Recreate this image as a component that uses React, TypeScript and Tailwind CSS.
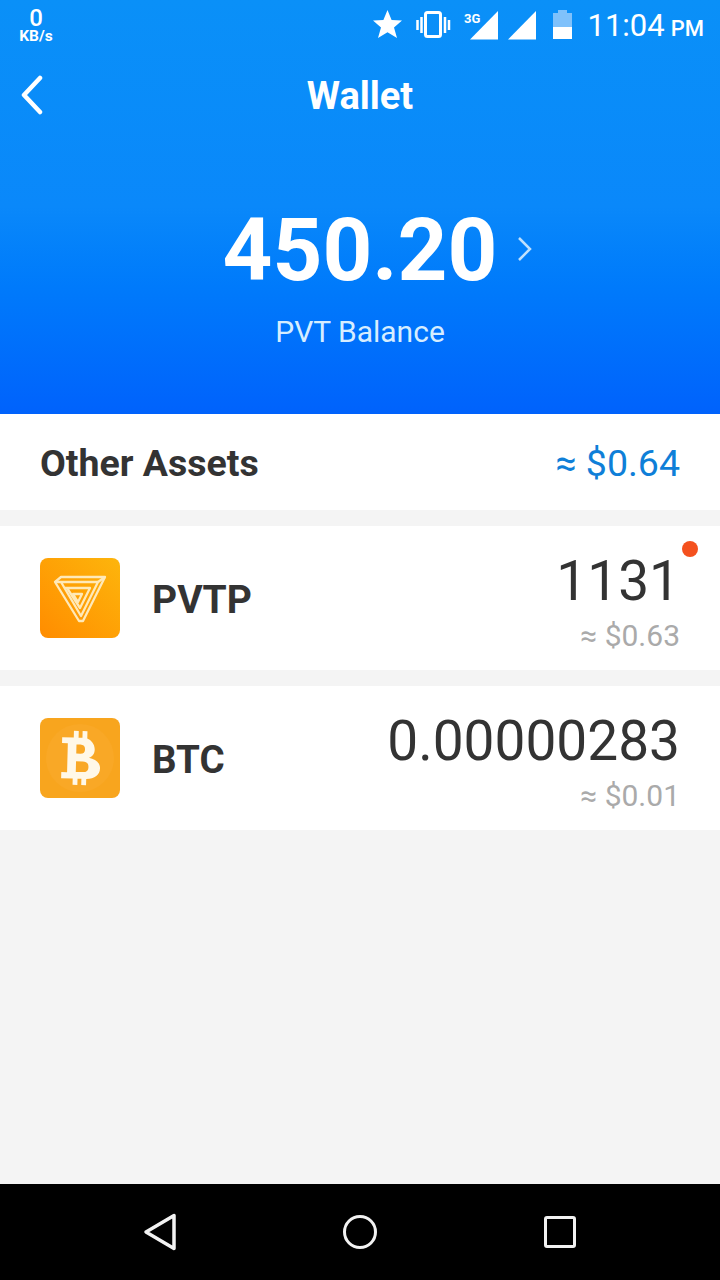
import React from "react";

function StatusIcons() {
  return (
    <svg width="199" height="50" viewBox="373 0 199 50">
      <path d="M387.5 10 L391.6 20 L402 20.6 L394 27.5 L397 38 L387.5 32.2 L378 38 L381 27.5 L373 20.6 L383.4 20 Z" fill="#fff" />
      <rect x="425.5" y="12.5" width="15" height="24" rx="2" fill="none" stroke="#fff" strokeWidth="3" />
      <path d="M417.5 20 v10 M421.5 17 v16 M445 17 v16 M449 20 v10" stroke="#fff" strokeWidth="2.5" fill="none" />
      <text x="464" y="23" fill="#fff" fontSize="13" fontWeight="700" fontFamily="Roboto, sans-serif">3G</text>
      <path d="M470 39.5 L498 11 V39.5 Z" fill="#fff" />
      <path d="M508 39.5 L536 11 V39.5 Z" fill="#fff" />
      <rect x="558" y="10" width="9" height="3" fill="#7fc1fb" />
      <rect x="553" y="13" width="19" height="14" fill="#7fc1fb" />
      <rect x="553" y="27" width="19" height="12" fill="#fff" />
    </svg>
  );
}

export default function App() {
  return (
    <div className="flex h-[1280px] w-[720px] flex-col overflow-hidden bg-[#f4f4f4] font-['Roboto',sans-serif]">
      <header className="flex h-[414px] flex-col bg-gradient-to-b from-[#0a90f8] via-[#0a88fa] to-[#0062fc] text-white">
        <div className="flex h-[50px] items-start justify-between pl-[18px] pr-[16px]">
          <div className="flex w-[36px] flex-col items-center pt-[9px]">
            <span className="text-[24px] font-medium leading-[19px]">0</span>
            <span className="mt-[1px] text-[15.5px] font-bold leading-[14px]">KB/s</span>
          </div>
          <div className="flex items-start">
            <StatusIcons />
            <span className="ml-[16px] mt-[6px] text-[31px] leading-[40px]">11:04</span>
            <span className="ml-[6px] mt-[9px] text-[22px] font-medium leading-[40px]">PM</span>
          </div>
        </div>
        <div className="relative flex h-[90px] items-center justify-center pt-[2px]">
          <svg width="26" height="40" viewBox="0 0 26 40" className="absolute left-[19px] top-[25px]">
            <path d="M21 3 L5 20 L21 37" fill="none" stroke="#fff" strokeWidth="4.5" strokeLinecap="round" strokeLinejoin="round" />
          </svg>
          <h1 className="text-[38px] font-bold leading-none">Wallet</h1>
        </div>
        <div className="relative mt-[72px] flex justify-center">
          <span className="text-[87px] font-bold leading-[76px]">450.20</span>
          <svg width="18" height="26" viewBox="0 0 18 26" className="absolute left-[516px] top-[24px]">
            <path d="M3 2 L14 13 L3 24" fill="none" stroke="#bfe0fd" strokeWidth="2.5" />
          </svg>
        </div>
        <p className="mt-[26px] text-center text-[30px] leading-[36px] text-[#d6edff]">PVT Balance</p>
      </header>

      <div className="flex h-[96px] items-center justify-between bg-white px-[40px] pt-[4px]">
        <span className="text-[37.5px] font-bold leading-none text-[#333]">Other Assets</span>
        <span className="text-[37.5px] leading-none text-[#0f7fd8]">≈ $0.64</span>
      </div>

      <section className="mt-[16px] flex h-[144px] items-center bg-white px-[40px]">
        <div className="flex h-[80px] w-[80px] items-center justify-center rounded-[8px] bg-gradient-to-tr from-[#ff8c00] to-[#fdb50c]">
          <svg width="80" height="80" viewBox="0 0 80 80" fill="none" stroke="#ffe9b8" strokeWidth="2.3" strokeLinejoin="round">
            <path d="M15 24 L21 19 H65 L43 63 H39 Z" />
            <path d="M15 24 H58 L41 58 L21 24" />
            <path d="M65 19 L58 24" />
            <path d="M25 30 H50 L40 50 L27 30" />
            <path d="M33 36 H42 L38 44 Z" />
          </svg>
        </div>
        <span className="ml-[32px] mt-[4px] text-[39px] font-bold leading-none text-[#333]">PVTP</span>
        <div className="relative ml-auto flex flex-col items-end pt-[8px]">
          <span className="absolute right-[-18px] top-[-2px] h-[16px] w-[16px] rounded-full bg-[#f4511e]" />
          <span className="text-[55px] leading-[60px] text-[#333]">1131</span>
          <span className="mt-[7px] text-[30px] leading-[36px] text-[#aaaaaa]">≈ $0.63</span>
        </div>
      </section>

      <section className="mt-[16px] flex h-[144px] items-center bg-white px-[40px]">
        <div className="flex h-[80px] w-[80px] items-center justify-center rounded-[8px] bg-[#f8a51e]">
          <div className="flex h-[68px] w-[68px] items-center justify-center rounded-full bg-[#f9a826]">
            <svg width="44" height="56" viewBox="0 0 44 58" fill="#fff8e8">
              <path
                transform="rotate(1.5 22 29)"
                fillRule="evenodd"
                d="M3 8 H15 V1 H20 V8 H24 V1 H29 V8.5 C33 10 37 14 37 20 C37 24.5 34.5 27.5 31 28.5 C38 29.5 43 33.5 43 39 C43 46 38 50 29 50.5 V57 H24 V50.5 H20 V57 H15 V50.5 H3 V44 H9 V14 H3 Z M18 15 V24.5 H22 C25.5 24.5 27 23 27 20 C27 17 25.5 15 22 15 Z M18 32.5 V43.5 H25 C29 43.5 31 42 31 38 C31 34.5 29 32.5 25 32.5 Z"
              />
            </svg>
          </div>
        </div>
        <span className="ml-[32px] mt-[4px] text-[38.5px] font-bold leading-none text-[#333]">BTC</span>
        <div className="ml-auto flex flex-col items-end pt-[8px]">
          <span className="text-[55px] leading-[60px] text-[#333]">0.00000283</span>
          <span className="mt-[7px] text-[30px] leading-[36px] text-[#aaaaaa]">≈ $0.01</span>
        </div>
      </section>

      <div className="flex-1" />

      <nav className="flex h-[96px] items-center justify-center bg-black">
        <div className="flex w-[200px] justify-center">
          <svg width="40" height="40" viewBox="0 0 40 40">
            <path d="M34 3.5 V36.5 L6 20 Z" fill="none" stroke="#f2f2f2" strokeWidth="3.5" strokeLinejoin="round" />
          </svg>
        </div>
        <div className="flex w-[200px] justify-center">
          <div className="h-[34px] w-[34px] rounded-full border-[3.5px] border-[#f2f2f2]" />
        </div>
        <div className="flex w-[200px] justify-center">
          <div className="h-[32px] w-[32px] rounded-[3px] border-[3.5px] border-[#f2f2f2]" />
        </div>
      </nav>
    </div>
  );
}
